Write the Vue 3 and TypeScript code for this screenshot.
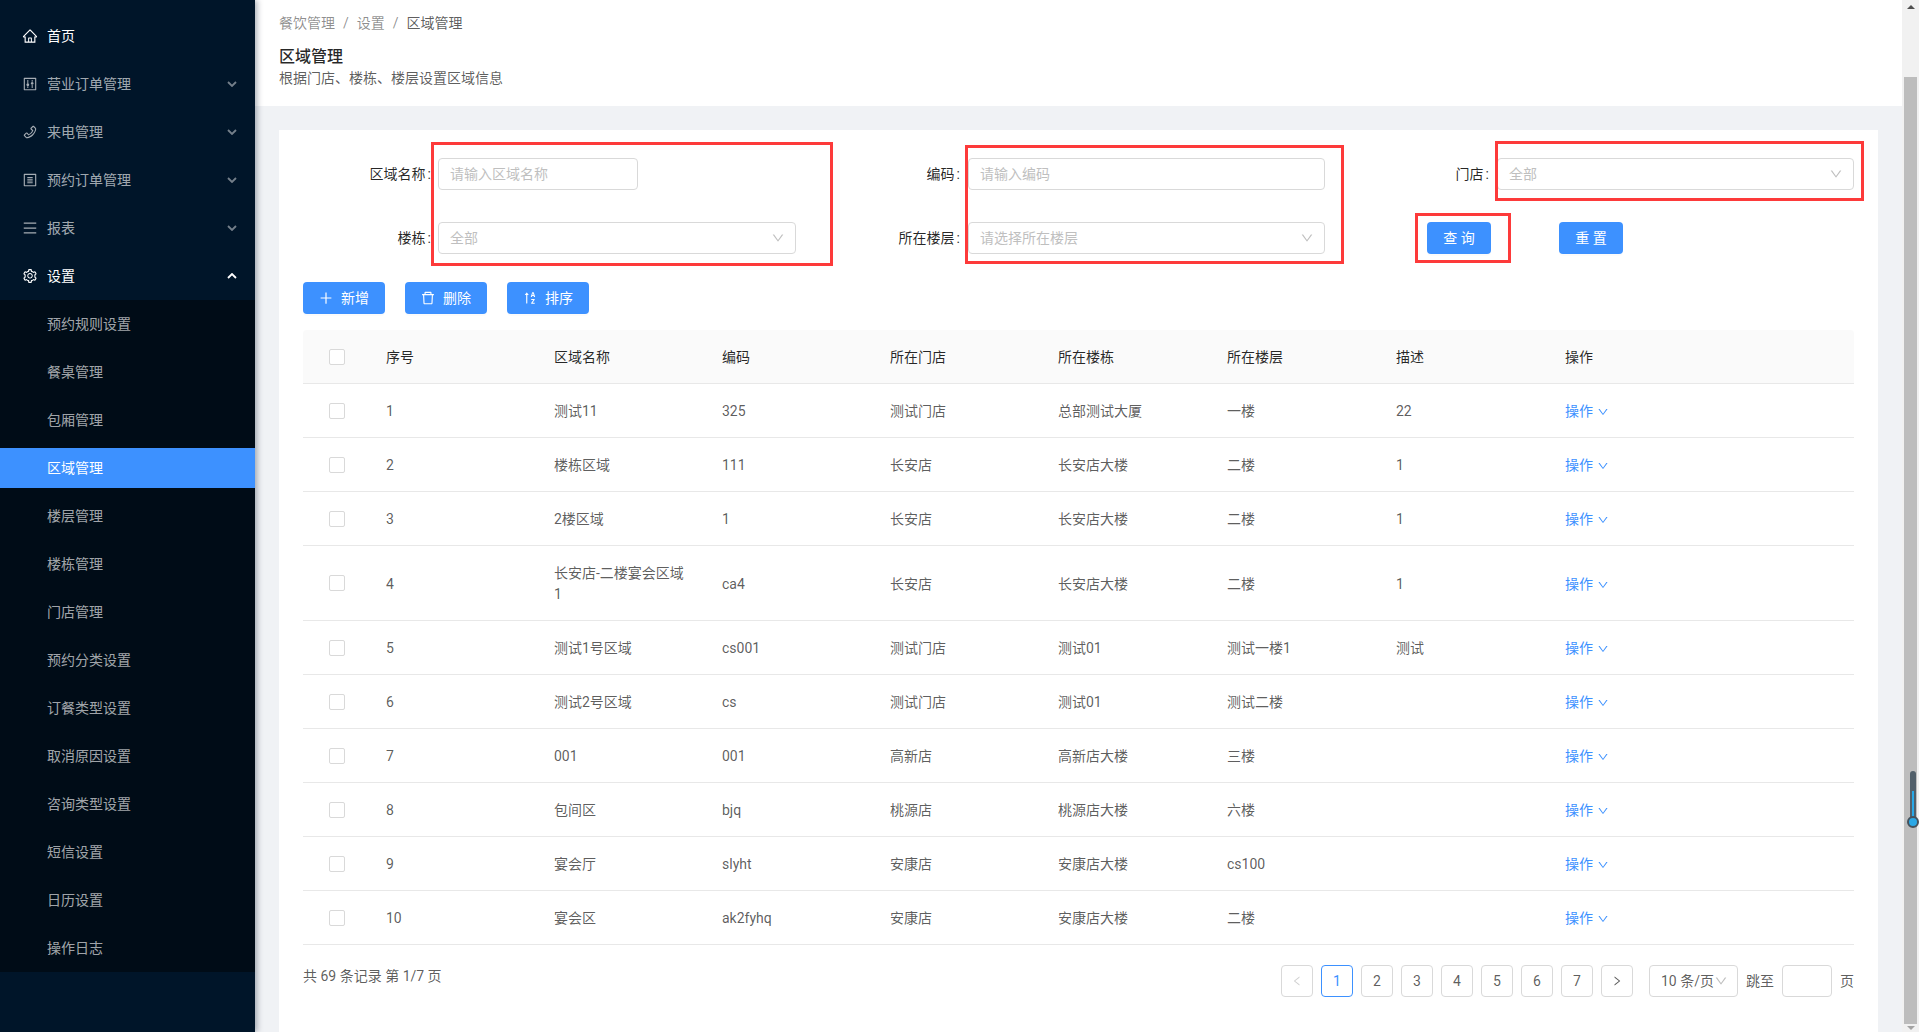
<script setup lang="ts">
interface Row { no: number; name: string; code: string; store: string; building: string; floor: string; desc: string }
const P = {
  home: 'M946.5 505L560.1 118.8l-25.9-25.9a31.5 31.5 0 0 0-44.4 0L77.5 505a63.9 63.9 0 0 0-18.8 46c.4 35.2 29.7 63.3 64.9 63.3h42.5V940h691.8V614.3h43.4c17.1 0 33.2-6.7 45.3-18.8a63.6 63.6 0 0 0 18.7-45.3c0-17-6.7-33.1-18.8-45.2zM568 868H456V664h112v204zm217.9-325.7V868H632V640c0-22.1-17.9-40-40-40H432c-22.1 0-40 17.9-40 40v228H238.1V542.3h-96l370-369.7 23.1 23.1L882 542.3h-96.1z',
  phone: 'M877.1 238.7L770.6 132.3c-13-13-30.4-20.3-48.8-20.3s-35.8 7.2-48.8 20.3L558.3 246.8c-13 13-20.3 30.5-20.3 48.9 0 18.5 7.2 35.8 20.3 48.9l89.6 89.7a405.46 405.46 0 0 1-86.4 127.3c-36.7 36.9-79.6 66-127.2 86.6l-89.6-89.7c-13-13-30.4-20.3-48.8-20.3a68.2 68.2 0 0 0-48.8 20.3L132.3 673c-13 13-20.3 30.5-20.3 48.9 0 18.5 7.2 35.8 20.3 48.9l106.4 106.4c22.2 22.2 52.8 34.9 84.2 34.9 6.5 0 12.8-.5 19.2-1.6 132.4-21.8 263.8-92.3 369.9-198.3C818 606 888.4 474.6 910.4 342.1c6.3-37.6-6.3-76.3-33.3-103.4zm-37.6 91.5c-19.5 117.9-82.9 235.5-178.4 331s-213 158.9-330.9 178.4c-14.8 2.5-30-2.5-40.8-13.2L184.9 721.9 295.7 611l119.8 120 .9.9 21.6-8a481.29 481.29 0 0 0 285.7-285.8l8-21.6-120.8-120.7 110.8-110.9 104.5 104.5c10.8 10.8 15.8 26 13.3 40.8z',
  control: 'M880 112H144c-17.7 0-32 14.3-32 32v736c0 17.7 14.3 32 32 32h736c17.7 0 32-14.3 32-32V144c0-17.7-14.3-32-32-32zm-40 728H184V184h656v656zM340 256h64v200h-64zM340 660h64v108h-64zM620 256h64v108h-64zM620 570h64v198h-64zM372 470a88 88 0 1 0 .1 0zM652 380a88 88 0 1 0 .1 0z',
  profile: 'M880 112H144c-17.7 0-32 14.3-32 32v736c0 17.7 14.3 32 32 32h736c17.7 0 32-14.3 32-32V144c0-17.7-14.3-32-32-32zm-40 728H184V184h656v656zM340 320h344v56H340zM340 434h344v56H340zM340 548h344v56H340zM340 662h344v56H340z',
  bars: 'M904 160H120c-4.4 0-8 3.6-8 8v64c0 4.4 3.6 8 8 8h784c4.4 0 8-3.6 8-8v-64c0-4.4-3.6-8-8-8zm0 624H120c-4.4 0-8 3.6-8 8v64c0 4.4 3.6 8 8 8h784c4.4 0 8-3.6 8-8v-64c0-4.4-3.6-8-8-8zm0-312H120c-4.4 0-8 3.6-8 8v64c0 4.4 3.6 8 8 8h784c4.4 0 8-3.6 8-8v-64c0-4.4-3.6-8-8-8z',
  setting: 'M924.8 625.7l-65.5-56c3.1-19 4.7-38.4 4.7-57.8s-1.6-38.8-4.7-57.8l65.5-56a32.03 32.03 0 0 0 9.3-35.2l-.9-2.6a443.74 443.74 0 0 0-79.7-137.9l-1.8-2.1a32.12 32.12 0 0 0-35.1-9.5l-81.3 28.9c-30-24.6-63.5-44-99.7-57.6l-15.7-85a32.05 32.05 0 0 0-25.8-25.7l-2.7-.5c-52.1-9.4-106.9-9.4-159 0l-2.7.5a32.05 32.05 0 0 0-25.8 25.7l-15.8 85.4a351.86 351.86 0 0 0-99 57.4l-81.9-29.1a32 32 0 0 0-35.1 9.5l-1.8 2.1a446.02 446.02 0 0 0-79.7 137.9l-.9 2.6c-4.5 12.5-.8 26.5 9.3 35.2l66.3 56.6c-3.1 18.8-4.6 38-4.6 57.1 0 19.2 1.5 38.4 4.6 57.1L99 625.5a32.03 32.03 0 0 0-9.3 35.2l.9 2.6c18.1 50.4 44.9 96.9 79.7 137.9l1.8 2.1a32.12 32.12 0 0 0 35.1 9.5l81.9-29.1c29.8 24.5 63.1 43.9 99 57.4l15.8 85.4a32.05 32.05 0 0 0 25.8 25.7l2.7.5a449.4 449.4 0 0 0 159 0l2.7-.5a32.05 32.05 0 0 0 25.8-25.7l15.7-85a350 350 0 0 0 99.7-57.6l81.3 28.9a32 32 0 0 0 35.1-9.5l1.8-2.1c34.8-41.1 61.6-87.5 79.7-137.9l.9-2.6c4.5-12.3.8-26.3-9.3-35zM788.3 465.9c2.5 15.1 3.8 30.6 3.8 46.1s-1.3 31-3.8 46.1l-6.6 40.1 74.7 63.9a370.03 370.03 0 0 1-42.6 73.6L721 702.8l-31.4 25.8c-23.9 19.6-50.5 35-79.3 45.8l-38.1 14.3-17.9 97a377.5 377.5 0 0 1-85 0l-17.9-97.2-37.8-14.5c-28.5-10.8-55-26.2-78.7-45.7l-31.4-25.9-93.4 33.2c-17-22.9-31.2-47.6-42.6-73.6l75.5-64.5-6.5-40c-2.4-14.9-3.7-30.3-3.7-45.5 0-15.3 1.2-30.6 3.7-45.5l6.5-40-75.5-64.5c11.3-26.1 25.6-50.7 42.6-73.6l93.4 33.2 31.4-25.9c23.7-19.5 50.2-34.9 78.7-45.7l37.9-14.3 17.9-97.2c28.1-3.2 56.8-3.2 85 0l17.9 97 38.1 14.3c28.7 10.8 55.4 26.2 79.3 45.8l31.4 25.8 92.8-32.9c17 22.9 31.2 47.6 42.6 73.6L781.8 426l6.5 39.9zM512 326c-97.2 0-176 78.8-176 176s78.8 176 176 176 176-78.8 176-176-78.8-176-176-176zm79.2 255.2A111.6 111.6 0 0 1 512 614c-29.9 0-58-11.7-79.2-32.8A111.6 111.6 0 0 1 400 502c0-29.9 11.7-58 32.8-79.2C454 401.6 482.1 390 512 390c29.9 0 58 11.6 79.2 32.8A111.6 111.6 0 0 1 624 502c0 29.9-11.7 58-32.8 79.2z',
  plus: 'M482 152h60q8 0 8 8v704q0 8-8 8h-60q-8 0-8-8V160q0-8 8-8zM176 474h672q8 0 8 8v60q0 8-8 8H176q-8 0-8-8v-60q0-8 8-8z',
  del: 'M360 184h-8c4.4 0 8-3.6 8-8v8h304v-8c0 4.4 3.6 8 8 8h-8v72h72v-80c0-35.3-28.7-64-64-64H352c-35.3 0-64 28.7-64 64v80h72v-72zm504 72H160c-17.7 0-32 14.3-32 32v32c0 4.4 3.6 8 8 8h60.4l24.7 523c1.6 34.1 29.8 61 63.9 61h454c34.2 0 62.3-26.8 63.9-61l24.7-523H888c4.4 0 8-3.6 8-8v-32c0-17.7-14.3-32-32-32zM731.3 840H292.7l-24.2-512h487l-24.2 512z',
  sort: 'M839.6 433.8L749 150.5a9.24 9.24 0 0 0-8.9-6.5h-77.4c-4.1 0-7.6 2.6-8.9 6.5l-91.3 283.3c-.3.9-.5 1.9-.5 2.9 0 5.1 4.2 9.3 9.3 9.3h56.4c4.2 0 7.8-2.8 9-6.8l17.5-61.6h89l17.3 61.5c1.1 4 4.8 6.8 9 6.8h61.2c1 0 1.9-.1 2.8-.4 2.4-.8 4.3-2.4 5.5-4.6 1.1-2.2 1.3-4.7.6-7.1zM663.3 325.5l32.8-116.9h6.3l32.1 116.9h-71.2zm143.5 492.9H677.2v-.4l132.6-188.9c1.1-1.6 1.7-3.4 1.7-5.4v-36.4c0-5.1-4.2-9.3-9.3-9.3h-204c-5.1 0-9.3 4.2-9.3 9.3v43c0 5.1 4.2 9.3 9.3 9.3h122.6v.4L587.7 828.9a9.35 9.35 0 0 0-1.7 5.4v36.4c0 5.1 4.2 9.3 9.3 9.3h211.4c5.1 0 9.3-4.2 9.3-9.3v-43a9.2 9.2 0 0 0-9.2-9.3zM310.3 167.1a8 8 0 0 0-12.6 0L185.7 309c-4.2 5.3-.4 13 6.3 13h76v530c0 4.4 3.6 8 8 8h56c4.4 0 8-3.6 8-8V322h76c6.7 0 10.5-7.8 6.3-13l-112-141.9z',
  down: 'M884 256h-75c-5.1 0-9.9 2.5-12.9 6.6L512 654.2 227.9 262.6c-3-4.1-7.8-6.6-12.9-6.6h-75c-6.5 0-10.3 7.4-6.5 12.7l352.6 486.1c12.8 17.6 39 17.6 51.7 0l352.6-486.1c3.9-5.3.1-12.7-6.4-12.7z',
  left: 'M724 218.3V141c0-6.7-7.7-10.4-12.9-6.3L260.3 486.8a31.86 31.86 0 0 0 0 50.3l450.8 352.1c5.3 4.1 12.9.4 12.9-6.3v-77.3c0-4.9-2.3-9.6-6.1-12.6l-360-281 360-281.1c3.8-3 6.1-7.7 6.1-12.6z',
  right: 'M765.7 486.8L314.9 134.7A7.97 7.97 0 0 0 302 141v77.3c0 4.9 2.3 9.6 6.1 12.6l360 281.1-360 281.1c-3.9 3-6.1 7.7-6.1 12.6V883c0 6.7 7.7 10.4 12.9 6.3l450.8-352.1a31.96 31.96 0 0 0 0-50.4z'
}
const menu = [
  { t: '首页', i: P.home, on: true, arrow: '' },
  { t: '营业订单管理', i: P.control, on: false, arrow: 'd' },
  { t: '来电管理', i: P.phone, on: false, arrow: 'd' },
  { t: '预约订单管理', i: P.profile, on: false, arrow: 'd' },
  { t: '报表', i: P.bars, on: false, arrow: 'd' },
  { t: '设置', i: P.setting, on: true, arrow: 'u' }
]
const sub = ['预约规则设置', '餐桌管理', '包厢管理', '区域管理', '楼层管理', '楼栋管理', '门店管理', '预约分类设置', '订餐类型设置', '取消原因设置', '咨询类型设置', '短信设置', '日历设置', '操作日志']
const rows: Row[] = [
  { no: 1, name: '测试11', code: '325', store: '测试门店', building: '总部测试大厦', floor: '一楼', desc: '22' },
  { no: 2, name: '楼栋区域', code: '111', store: '长安店', building: '长安店大楼', floor: '二楼', desc: '1' },
  { no: 3, name: '2楼区域', code: '1', store: '长安店', building: '长安店大楼', floor: '二楼', desc: '1' },
  { no: 4, name: '长安店-二楼宴会区域1', code: 'ca4', store: '长安店', building: '长安店大楼', floor: '二楼', desc: '1' },
  { no: 5, name: '测试1号区域', code: 'cs001', store: '测试门店', building: '测试01', floor: '测试一楼1', desc: '测试' },
  { no: 6, name: '测试2号区域', code: 'cs', store: '测试门店', building: '测试01', floor: '测试二楼', desc: '' },
  { no: 7, name: '001', code: '001', store: '高新店', building: '高新店大楼', floor: '三楼', desc: '' },
  { no: 8, name: '包间区', code: 'bjq', store: '桃源店', building: '桃源店大楼', floor: '六楼', desc: '' },
  { no: 9, name: '宴会厅', code: 'slyht', store: '安康店', building: '安康店大楼', floor: 'cs100', desc: '' },
  { no: 10, name: '宴会区', code: 'ak2fyhq', store: '安康店', building: '安康店大楼', floor: '二楼', desc: '' }
]
const heads = ['序号', '区域名称', '编码', '所在门店', '所在楼栋', '所在楼层', '描述', '操作']
const pages = [1, 2, 3, 4, 5, 6, 7]
</script>

<template>
  <div class="app">
    <aside class="side">
      <div v-for="m in menu" :key="m.t" class="mi" :class="{ on: m.on }">
        <svg class="ic" viewBox="0 0 1024 1024"><path :d="m.i" /></svg>
        <span class="grow">{{ m.t }}</span>
        <svg v-if="m.arrow" class="ar" :class="{ up: m.arrow === 'u' }" viewBox="0 0 10 6"><path d="M1 1l4 4 4-4" /></svg>
      </div>
      <div class="sub">
        <div v-for="s in sub" :key="s" class="si" :class="{ act: s === '区域管理' }">{{ s }}</div>
      </div>
    </aside>

    <main class="main">
      <header class="head">
        <div class="crumb"><span>餐饮管理</span><i>/</i><span>设置</span><i>/</i><b>区域管理</b></div>
        <h1>区域管理</h1>
        <p>根据门店、楼栋、楼层设置区域信息</p>
      </header>
      <section class="card">
        <form class="form" @submit.prevent>
          <label>区域名称<em>:</em></label>
          <div class="field short"><span>请输入区域名称</span></div>
          <label class="far">编码<em>:</em></label>
          <div class="field"><span>请输入编码</span></div>
          <label class="far">门店<em>:</em></label>
          <div class="field sel"><span>全部</span><svg viewBox="0 0 1024 1024"><path :d="P.down" /></svg></div>
          <label>楼栋<em>:</em></label>
          <div class="field sel"><span>全部</span><svg viewBox="0 0 1024 1024"><path :d="P.down" /></svg></div>
          <label class="far">所在楼层<em>:</em></label>
          <div class="field sel"><span>请选择所在楼层</span><svg viewBox="0 0 1024 1024"><path :d="P.down" /></svg></div>
          <div class="acts"><button class="btn" type="button">查 询</button><button class="btn" type="button">重 置</button></div>
        </form>

        <div class="bar">
          <button class="btn" type="button"><svg viewBox="0 0 1024 1024"><path :d="P.plus" /></svg>新增</button>
          <button class="btn" type="button"><svg viewBox="0 0 1024 1024"><path :d="P.del" /></svg>删除</button>
          <button class="btn" type="button"><svg viewBox="0 0 1024 1024"><path :d="P.sort" /></svg>排序</button>
        </div>

        <table class="tb">
          <colgroup>
            <col class="c0" /><col class="c1" /><col class="c1" /><col class="c1" /><col class="c1" /><col class="c2" /><col class="c2" /><col class="c2" /><col />
          </colgroup>
          <thead>
            <tr><th class="ck"><i class="box" /></th><th v-for="h in heads" :key="h">{{ h }}</th></tr>
          </thead>
          <tbody>
            <tr v-for="r in rows" :key="r.no">
              <td class="ck"><i class="box" /></td>
              <td>{{ r.no }}</td><td>{{ r.name }}</td><td>{{ r.code }}</td><td>{{ r.store }}</td><td>{{ r.building }}</td><td>{{ r.floor }}</td><td>{{ r.desc }}</td>
              <td class="op">操作<svg viewBox="0 0 1024 1024"><path :d="P.down" /></svg></td>
            </tr>
          </tbody>
        </table>

        <div class="foot">
          <span class="total">共 69 条记录 第 1/7 页</span>
          <div class="pager">
            <span class="pg dis"><svg viewBox="0 0 1024 1024"><path :d="P.left" /></svg></span>
            <span v-for="p in pages" :key="p" class="pg" :class="{ cur: p === 1 }">{{ p }}</span>
            <span class="pg"><svg viewBox="0 0 1024 1024"><path :d="P.right" /></svg></span>
            <span class="size">10 条/页<svg viewBox="0 0 1024 1024"><path :d="P.down" /></svg></span>
            <span class="jump">跳至</span><span class="jin" /><span class="jend">页</span>
          </div>
        </div>
      </section>

      <div class="red r1" /><div class="red r2" /><div class="red r3" /><div class="red r4" />
    </main>

    <div class="sb">
      <span class="tri t" />
      <div class="thumb" />
      <span class="tri b" />
      <div class="thermo"><span class="tube"><span class="fill" /></span><span class="bulb" /></div>
    </div>
  </div>
</template>

<style>
html, body { margin: 0; height: 100%; overflow: hidden; background: #f0f2f5; }
</style>

<style scoped>
.app { display: flex; height: 1032px; overflow: hidden; position: relative; font: 14px/21px Roboto, "Noto Sans CJK SC", sans-serif; color: rgba(0,0,0,.65); }
.side { width: 255px; flex: none; background: #001529; box-shadow: 2px 0 6px rgba(0,21,41,.35); position: relative; z-index: 2; padding-top: 16px; box-sizing: border-box; color: rgba(255,255,255,.65); }
.mi { height: 40px; margin-bottom: 8px; display: flex; align-items: center; padding: 0 18px 0 22px; }
.mi:nth-child(6) { margin-bottom: 4px; }
.mi.on { color: #fff; }
.ic { width: 16px; height: 16px; fill: currentColor; margin-right: 9px; flex: none; }
.grow { flex: 1; }
.ar { width: 10px; height: 6px; fill: none; stroke: currentColor; stroke-width: 1.8; opacity: .7; }
.ar.up { transform: rotate(180deg); opacity: 1; }
.sub { background: #000c17; padding: 4px 0; }
.si { height: 40px; margin: 0 0 8px; line-height: 40px; padding-left: 47px; }
.si:last-child { margin-bottom: 0; }
.si.act { background: #3d91ff; color: #fff; }
.main { flex: 1; min-width: 0; background: #f0f2f5; position: relative; }
.head { height: 106px; background: #fff; padding: 13px 24px 0; box-sizing: border-box; }
.crumb { color: rgba(0,0,0,.45); height: 21px; white-space: nowrap; }
.crumb i { font-style: normal; margin: 0 8px; }
.crumb b { font-weight: 400; color: rgba(0,0,0,.65); }
h1 { margin: 12px 0 0; font-size: 16px; line-height: 22px; font-weight: 500; color: rgba(0,0,0,.85); }
p { margin: 0; line-height: 21px; }
.card { margin: 24px 24px 0; background: #fff; height: 902px; padding: 28px 24px 0; box-sizing: border-box; }
.form { display: grid; grid-template-columns: 135px 358px 172px 357px 172px 357px; grid-auto-rows: 32px; row-gap: 32px; }
label { text-align: right; line-height: 32px; padding-right: 7px; color: rgba(0,0,0,.85); white-space: nowrap; }
label.far { padding-right: 8px; }
label em { font-style: normal; margin-left: 2px; }
.field { border: 1px solid #d9d9d9; border-radius: 4px; box-sizing: border-box; height: 32px; display: flex; align-items: center; justify-content: space-between; padding: 0 10px 0 11px; color: #bfbfbf; background: #fff; }
.field.short { width: 200px; }
.field svg { width: 14px; height: 14px; fill: #bfbfbf; }
.acts { grid-column: 5 / span 2; padding-left: 102px; display: flex; gap: 68px; }
.btn { display: inline-flex; align-items: center; height: 32px; border: 0; border-radius: 4px; background: #3d91ff; color: #fff; font: inherit; white-space: pre; box-shadow: 0 2px 0 rgba(0,0,0,.015); }
.acts .btn { width: 64px; padding: 0; justify-content: center; }
.btn svg { width: 16px; height: 16px; fill: #fff; margin-right: 7px; }
.bar .btn { width: 82px; padding: 0 0 0 15px; }
.bar { display: flex; gap: 20px; margin-top: 28px; }
.tb { width: 1551px; table-layout: fixed; border-collapse: separate; border-spacing: 0; margin-top: 16px; }
.c0 { width: 67px; }
.c1 { width: 168px; }
.c2 { width: 169px; }
th { background: #fafafa; height: 51px; padding: 2px 16px 0; text-align: left; font-weight: 400; color: rgba(0,0,0,.85); border-bottom: 1px solid #e8e8e8; box-sizing: content-box; }
td { padding: 17px 16px 15px; border-bottom: 1px solid #e8e8e8; overflow-wrap: anywhere; }
th:first-child { border-top-left-radius: 4px; }
th:last-child { border-top-right-radius: 4px; }
th.ck, td.ck { padding: 0 0 0 26px; line-height: 0; }
.box { display: block; width: 14px; height: 14px; border: 1px solid #d9d9d9; border-radius: 2px; background: #fff; }
.op { color: #3d91ff; }
.op svg { width: 12px; height: 12px; fill: #3d91ff; margin-left: 4px; vertical-align: -2px; }
.foot { display: flex; justify-content: space-between; align-items: flex-start; margin-top: 20px; }
.total { margin-top: 1px; }
.pager { display: flex; align-items: center; gap: 8px; }
.pg { width: 32px; height: 32px; box-sizing: border-box; border: 1px solid #d9d9d9; border-radius: 4px; display: flex; align-items: center; justify-content: center; }
.pg svg { width: 12px; height: 12px; fill: rgba(0,0,0,.65); }
.pg.dis svg { fill: #d0d0d0; }
.pg.cur { border-color: #3d91ff; color: #3d91ff; }
.size { width: 89px; height: 32px; box-sizing: border-box; border: 1px solid #d9d9d9; border-radius: 4px; display: flex; align-items: center; padding-left: 11px; margin-left: 8px; white-space: nowrap; }
.size svg { width: 14px; height: 14px; fill: #bfbfbf; }
.jin { width: 50px; height: 32px; box-sizing: border-box; border: 1px solid #d9d9d9; border-radius: 4px; }
.sb { width: 17px; flex: none; background: #f1f1f1; display: flex; flex-direction: column; position: relative; }
.tri { width: 0; height: 0; border-left: 4px solid transparent; border-right: 4px solid transparent; align-self: center; flex: none; }
.tri.t { border-bottom: 4px solid #505050; margin: 5px 0 0; }
.tri.b { border-top: 4px solid #a3a3a3; margin: 2px 0 0; }
.thumb { background: #bdbdbd; width: 13px; align-self: center; flex: none; height: 947px; margin-top: 68px; }
.thermo { position: absolute; left: 5px; top: 771px; width: 12px; height: 58px; }
.tube { position: absolute; left: 3px; top: 0; width: 6px; height: 50px; background: #52606b; border-radius: 3px; }
.fill { position: absolute; left: 2px; top: 20px; width: 2px; height: 28px; background: #29a9e8; }
.bulb { position: absolute; left: 0; bottom: 1px; width: 8px; height: 8px; border: 2px solid #45525c; background: #2ba8e6; border-radius: 50%; }
.red { position: absolute; border: 3px solid #fd3a3a; box-sizing: border-box; pointer-events: none; }
.r1 { left: 176px; top: 142px; width: 402px; height: 124px; }
.r2 { left: 710px; top: 145px; width: 379px; height: 119px; }
.r3 { left: 1240px; top: 141px; width: 369px; height: 60px; }
.r4 { left: 1160px; top: 213px; width: 96px; height: 50px; }
</style>
